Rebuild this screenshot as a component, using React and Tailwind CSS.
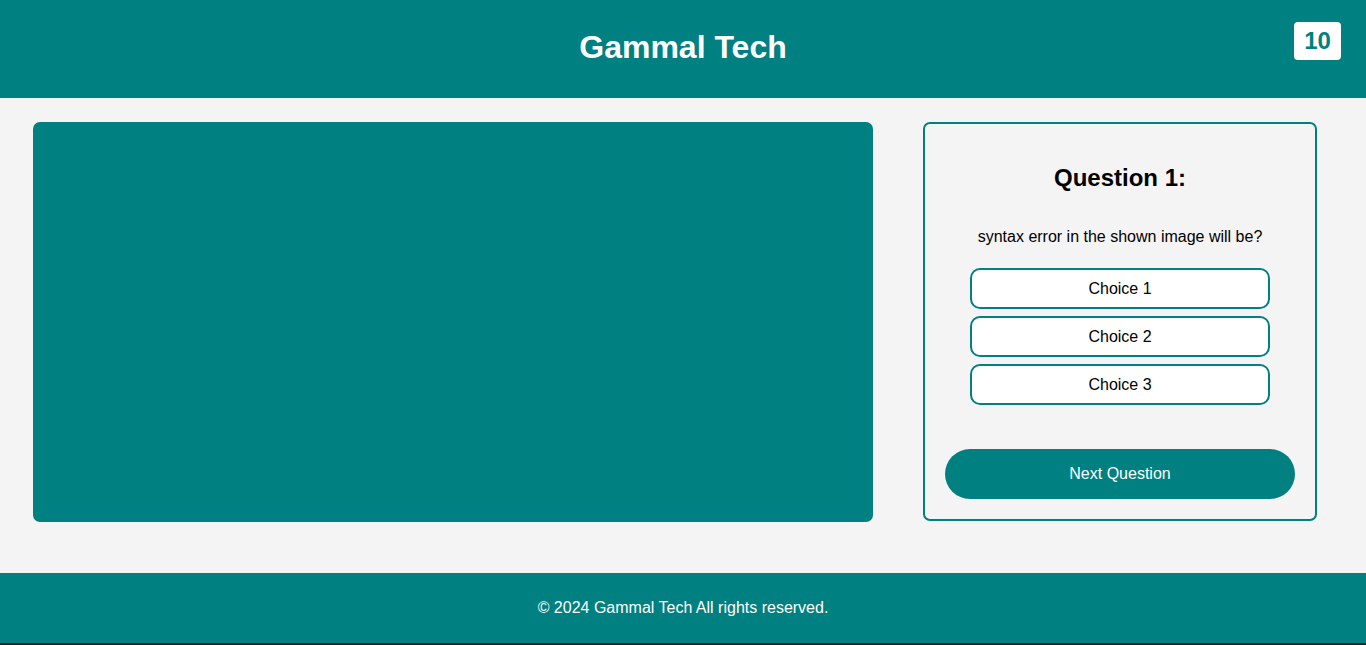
import React from 'react';

const choices = ['Choice 1', 'Choice 2', 'Choice 3'];

const App = () => {
  return (
    <div className="min-h-[645px] flex flex-col bg-[#f4f4f4] font-['Liberation_Sans',Arial,sans-serif]">
      {/* Header */}
      <header className="relative h-[98px] bg-[#008080] flex items-center justify-center">
        <h1 className="mb-[4px] text-[32px] font-bold text-white leading-none">Gammal Tech</h1>
        <div className="absolute right-[25px] top-[22px] w-[47px] h-[38px] bg-white rounded-[4px] flex items-center justify-center text-[24px] font-bold text-[#008080]">
          10
        </div>
      </header>

      {/* Main */}
      <main className="flex pt-[24px] pb-[51px] pl-[33px] gap-[50px]">
        <div className="w-[840px] h-[400px] bg-[#008080] rounded-[7px]" />

        <div className="w-[394px] h-[399px] border-2 border-[#008080] rounded-[7px] flex flex-col items-center px-[20px] pb-[20px]">
          <h2 className="mt-[40px] text-[24px] font-bold text-black leading-[28px]">Question 1:</h2>
          <p className="mt-[36px] text-[16px] text-black leading-[18px]">syntax error in the shown image will be?</p>
          <div className="mt-[22px] flex flex-col gap-[7px]">
            {choices.map((c) => (
              <button
                key={c}
                className="w-[300px] h-[41px] bg-white border-2 border-[#008080] rounded-[10px] text-[16px] text-black"
              >
                {c}
              </button>
            ))}
          </div>
          <button className="mt-auto w-[350px] h-[50px] bg-[#008080] rounded-[25px] text-white text-[16px]">
            Next Question
          </button>
        </div>
      </main>

      {/* Footer */}
      <footer className="h-[70px] bg-[#008080] flex items-center justify-center">
        <p className="text-[16px] text-white">© 2024 Gammal Tech All rights reserved.</p>
      </footer>
      <div className="h-[2px] bg-[#122222]" />
    </div>
  );
};

export default App;
